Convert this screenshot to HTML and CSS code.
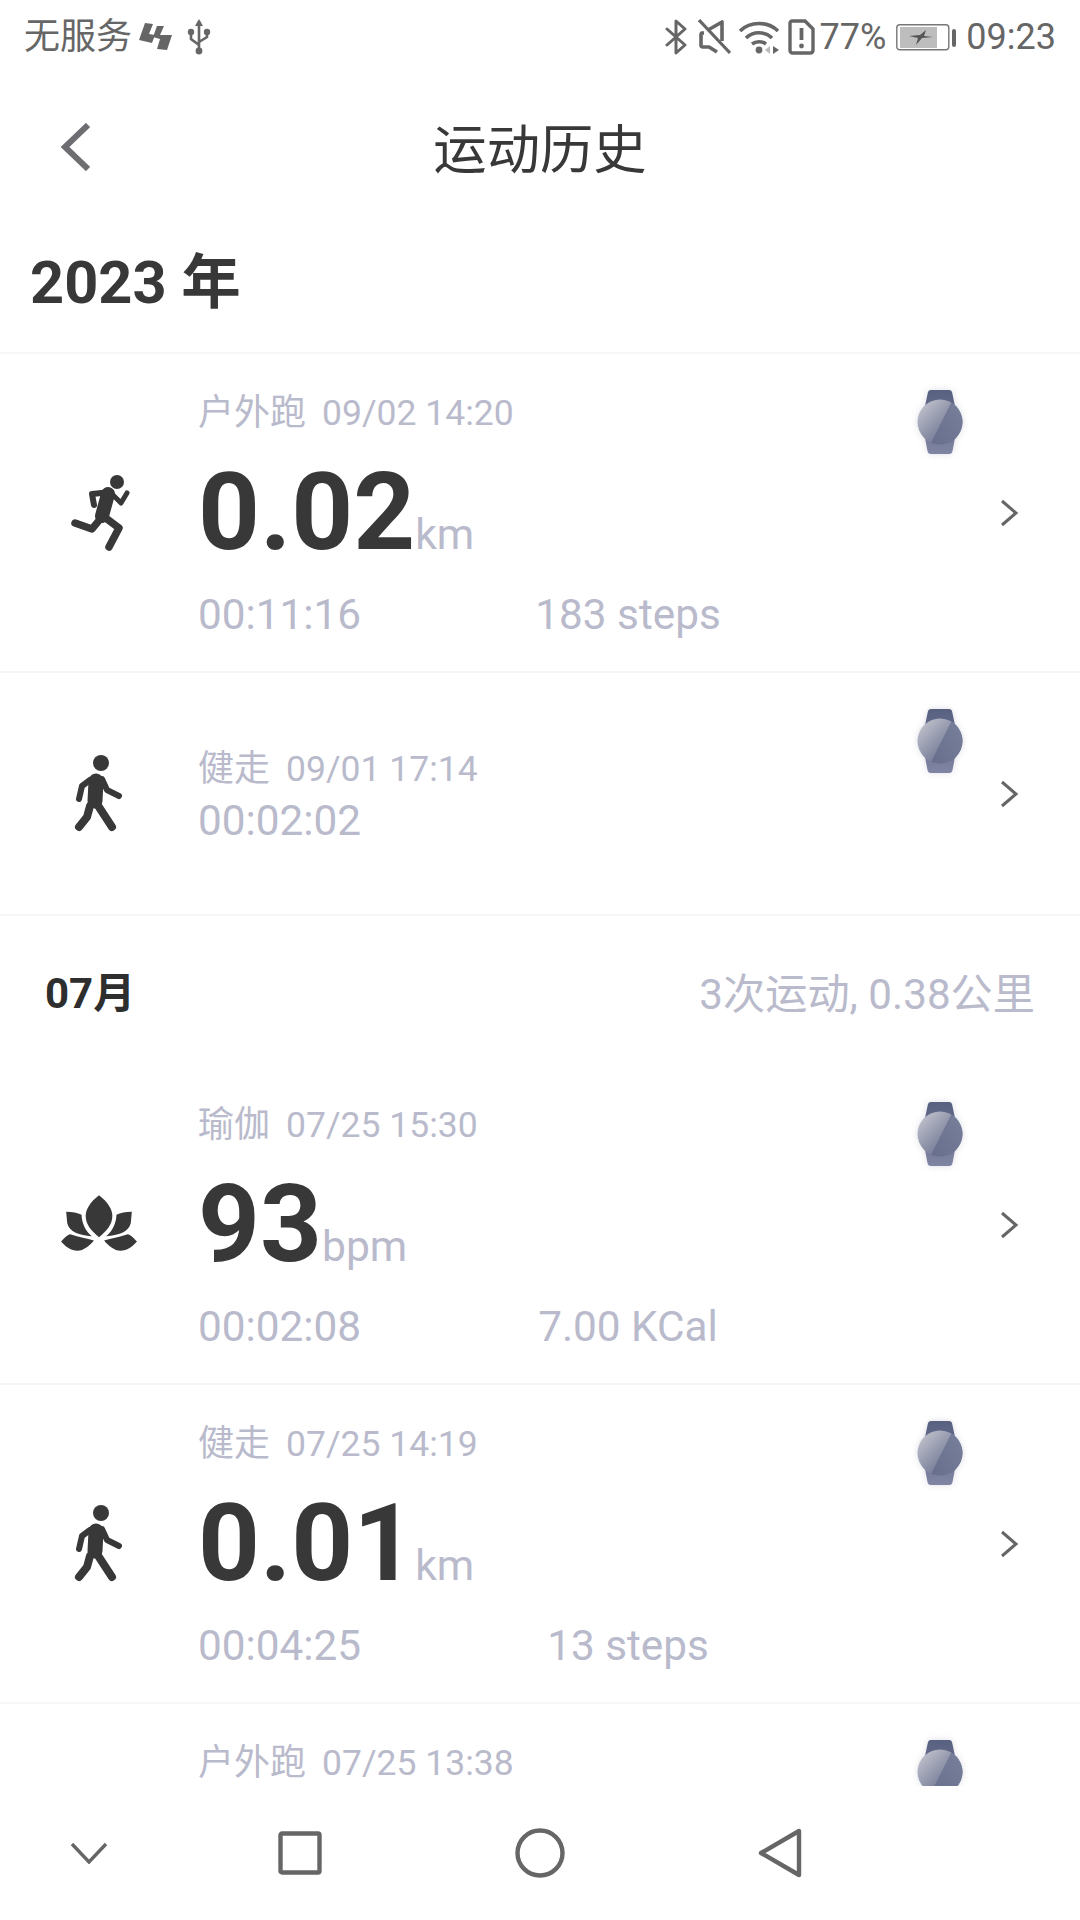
FILE: index.html
```html
<!DOCTYPE html>
<html lang="zh-CN">
<head>
<meta charset="utf-8">
<title>运动历史</title>
<link rel="stylesheet" href="styles.css">
</head>
<body>
<svg class="defs" width="0" height="0" aria-hidden="true">
  <defs>
    <linearGradient id="strap" x1="0" y1="0" x2="0" y2="1"><stop offset="0" stop-color="#596180"/><stop offset="0.5" stop-color="#6b7291"/><stop offset="1" stop-color="#7f85a2"/></linearGradient>
    <linearGradient id="face" x1="0.1" y1="0.1" x2="0.8" y2="0.8"><stop offset="0" stop-color="#bfc0cb"/><stop offset="0.7" stop-color="#80869f"/><stop offset="1" stop-color="#6f7693"/></linearGradient>
    <linearGradient id="band" x1="1" y1="0" x2="0" y2="1"><stop offset="0" stop-color="#7c839e"/><stop offset="1" stop-color="#646b89"/></linearGradient>
    <clipPath id="faceclip"><circle cx="30" cy="32" r="22.500"/></clipPath>
    <symbol id="watch" viewBox="0 0 60 64">
      <path d="M18 2 Q18.500 0 21 0 L39 0 Q41.500 0 42 2 L45 16 L45 48 L42.500 61 Q42 64 39 64 L21 64 Q18 64 17.500 61 L15 48 L15 16Z" fill="url(#strap)"/>
      <circle cx="30" cy="32" r="22.500" fill="url(#face)"/>
      <path d="M44.500 6 L15.500 64 L60 64 L60 6Z" fill="url(#band)" clip-path="url(#faceclip)"/>
    </symbol>
    <symbol id="chev" viewBox="0 0 20 28">
      <path d="M3 2 L17 14 L3 26" fill="none" stroke="#666" stroke-width="3"/>
    </symbol>
    <symbol id="run" viewBox="30 30 65 82">
      <circle cx="78" cy="42" r="7" fill="#383838"/>
      <g fill="none" stroke="#383838" stroke-linecap="round" stroke-linejoin="round">
        <path d="M72 52 L53 54 L55 65" stroke-width="6"/>
        <path d="M72 53 L82 63 L88 53" stroke-width="5"/>
        <path d="M69 54 L63 76" stroke-width="14"/>
        <path d="M62 78 L53 89 L36 83" stroke-width="7.500"/>
        <path d="M64 76 L80 88 L70 107" stroke-width="7.500"/>
      </g>
    </symbol>
    <symbol id="walk" viewBox="30 20 60 82">
      <circle cx="62" cy="32" r="8" fill="#383838"/>
      <g fill="none" stroke="#383838" stroke-linecap="round" stroke-linejoin="round">
        <path d="M57 50 L56 70" stroke-width="15"/>
        <path d="M51 49 L43 55 L40 68" stroke-width="6"/>
        <path d="M63 48 L68 59 L80 65" stroke-width="6"/>
        <path d="M51 75 L48 86 L40 96" stroke-width="8"/>
        <path d="M58 73 L73 96" stroke-width="8"/>
      </g>
    </symbol>
    <symbol id="lotus" viewBox="20 22 78 60">
      <g fill="#383838">
        <path d="M59 25 C50 32 46 39 46 45 C46 54 52 60 59 66 C66 60 72 54 72 45 C72 39 68 32 59 25Z"/>
        <g id="lotus-side">
          <path d="M27 41 C33 41 38 42 42 44 C42 52 46 60 52 65 C40 64 30 61 28 52 Z"/>
          <path d="M22 70 C26 66 29 63 31 63 C40 66 47 67 54 69 C50 74 44 79 38 79 C32 79 26 75 22 70Z"/>
        </g>
        <use href="#lotus-side" transform="translate(118 0) scale(-1 1)"/>
      </g>
    </symbol>
  </defs>
</svg>
<div class="screen">
  <header class="statusbar">
    <div class="status-group">
      <span class="status-text">无服务</span>
      <svg class="ic-hash" width="34" height="28" viewBox="0 0 34 28"><path d="M6 0 L14 1 L10 11 L16 12 L13 20 L0 17Z M18 3 L25 3 L21 12 L33 12 L28 27 L18 26 L21 16 L14 14Z" fill="#666"/></svg>
      <svg class="ic-usb" width="24" height="36" viewBox="0 0 24 36"><path d="M12 2 L12 33 M12 26 L4 20 L4 13 M12 23 L20 18 L20 13" fill="none" stroke="#666" stroke-width="2.600"/><path d="M12 0 L16 7 L8 7Z" fill="#666"/><circle cx="12" cy="32" r="3.400" fill="#666"/><circle cx="4" cy="13" r="3.200" fill="#666"/><circle cx="20" cy="13" r="3.200" fill="#666"/></svg>
    </div>
    <div class="status-group status-right">
      <svg width="24" height="36" viewBox="0 0 22 36"><path d="M2 10 L20 26 L11 34 L11 2 L20 10 L2 26" fill="none" stroke="#666" stroke-width="3" stroke-linejoin="round" stroke-linecap="round"/></svg>
      <svg class="ic-mute" width="33" height="36" viewBox="0 0 33 36"><path d="M6 14 L4 14 Q3 14 3 16 L3 26 Q3 28 5 28 L11 28 L19 33 M10 11 L24 3 L24 22" fill="none" stroke="#666" stroke-width="3.600" stroke-linejoin="round"/><path d="M1 1 L32 34" stroke="#666" stroke-width="3.200"/></svg>
      <svg class="ic-wifi" width="40" height="36" viewBox="0 0 40 36"><path d="M1 12 C11 2 29 2 39 12 M7 19 C14 12 26 12 33 19 M13 25 C17 22 23 22 27 25" fill="none" stroke="#666" stroke-width="3.600"/><circle cx="20" cy="31" r="3.400" fill="#666"/><path d="M34 27 L40 31 L34 35Z" fill="#666"/><path d="M31 27 L31 35 L26 31Z" fill="#bbb"/></svg>
      <svg class="ic-sim" width="27" height="36" viewBox="0 0 27 36"><path d="M4 2 L17 2 L25 10 L25 31 C25 33 24 34 22 34 L5 34 C3 34 2 33 2 31 L2 4 C2 3 3 2 4 2Z" fill="none" stroke="#666" stroke-width="3.400"/><path d="M13.500 9 L13.500 21" stroke="#666" stroke-width="3.800"/><circle cx="13.500" cy="27" r="2.400" fill="#666"/></svg>
      <span class="status-text status-pct">77%</span>
      <svg class="ic-batt" width="61" height="28" viewBox="0 0 61 28"><rect x="0.800" y="1.800" width="52" height="25" rx="3" fill="none" stroke="#777" stroke-width="1.400"/><rect x="4" y="4" width="37" height="21" fill="#bdbdbd"/><path d="M13 13 L24 12 L30 7 L28 13 L37 14 L26 15 L20 22 L22 15Z" fill="#555"/><rect x="56" y="6" width="4" height="18" rx="2" fill="#666"/></svg>
      <span class="status-text status-time">09:23</span>
    </div>
  </header>

  <nav class="appbar">
    <svg class="back" width="30" height="48" viewBox="0 0 30 48"><path d="M28 2 L5 24 L28 46" fill="none" stroke="#6e6e72" stroke-width="6"/></svg>
    <h1 class="title">运动历史</h1>
  </nav>

  <main class="list">
    <h2 class="year">2023 年</h2>

    <article class="row">
      <svg class="act act-run"><use href="#run"/></svg>
      <div class="body">
        <div class="meta">户外跑<span class="date">09/02 14:20</span></div>
        <div class="value"><b>0.02</b><span class="unit">km</span></div>
        <div class="stats"><span>00:11:16</span><span class="stat-c">183 steps</span></div>
      </div>
      <svg class="watch"><use href="#watch"/></svg>
      <svg class="chev"><use href="#chev"/></svg>
    </article>

    <article class="row row-short">
      <svg class="act act-walk"><use href="#walk"/></svg>
      <div class="body">
        <div class="meta">健走<span class="date">09/01 17:14</span></div>
        <div class="stats stats-short"><span>00:02:02</span></div>
      </div>
      <svg class="watch"><use href="#watch"/></svg>
      <svg class="chev"><use href="#chev"/></svg>
    </article>

    <section class="month">
      <span class="month-name">07月</span>
      <span class="month-sum">3次运动, 0.38公里</span>
    </section>

    <article class="row">
      <svg class="act act-lotus"><use href="#lotus"/></svg>
      <div class="body">
        <div class="meta">瑜伽<span class="date">07/25 15:30</span></div>
        <div class="value"><b>93</b><span class="unit">bpm</span></div>
        <div class="stats"><span>00:02:08</span><span class="stat-c">7.00 KCal</span></div>
      </div>
      <svg class="watch"><use href="#watch"/></svg>
      <svg class="chev"><use href="#chev"/></svg>
    </article>

    <article class="row">
      <svg class="act act-walk"><use href="#walk"/></svg>
      <div class="body">
        <div class="meta">健走<span class="date">07/25 14:19</span></div>
        <div class="value"><b>0.01</b><span class="unit">km</span></div>
        <div class="stats"><span>00:04:25</span><span class="stat-c">13 steps</span></div>
      </div>
      <svg class="watch"><use href="#watch"/></svg>
      <svg class="chev"><use href="#chev"/></svg>
    </article>

    <article class="row">
      <svg class="act act-run"><use href="#run"/></svg>
      <div class="body">
        <div class="meta">户外跑<span class="date">07/25 13:38</span></div>
      </div>
      <svg class="watch"><use href="#watch"/></svg>
      <svg class="chev"><use href="#chev"/></svg>
    </article>
  </main>

  <footer class="navbar">
    <svg width="38" height="22" viewBox="0 0 38 22"><path d="M2 2 L19 20 L36 2" fill="none" stroke="#666" stroke-width="3.400"/></svg>
    <svg width="44" height="44" viewBox="0 0 44 44"><rect x="2.500" y="2.500" width="39" height="39" rx="1.500" fill="none" stroke="#666" stroke-width="4.400"/></svg>
    <svg width="50" height="50" viewBox="0 0 50 50"><circle cx="25" cy="25" r="22.500" fill="none" stroke="#666" stroke-width="4.400"/></svg>
    <svg width="44" height="50" viewBox="0 0 44 50"><path d="M41 3 L41 47 L3 25Z" fill="none" stroke="#666" stroke-width="4.400" stroke-linejoin="round"/></svg>
  </footer>
</div>
</body>
</html>
```
FILE: styles.css
```css
* { box-sizing: border-box; }
html, body { margin: 0; padding: 0; background: #fff; }
body { font-family: Roboto, "Noto Sans CJK SC", sans-serif; color: #383838; }
.defs { position: absolute; }
.screen { width: 1080px; height: 1920px; display: flex; flex-direction: column; overflow: hidden; }

.statusbar { height: 72px; flex: none; display: flex; justify-content: space-between; align-items: center; padding: 2px 24px 0 24px; }
.status-group { display: flex; align-items: center; }
.status-text { font-size: 36px; line-height: 40px; color: #666; }
.ic-hash { margin-left: 7px; }
.ic-usb { margin-left: 14px; }
.ic-mute { margin-left: 10px; }
.ic-wifi { margin-left: 8px; }
.ic-sim { margin-left: 9px; }
.status-pct { margin-left: 5px; }
.ic-batt { margin-left: 10px; }
.status-time { margin-left: 9px; }

.appbar { height: 156px; flex: none; position: relative; display: flex; align-items: center; justify-content: center; padding-top: 2px; }
.back { position: absolute; left: 60px; top: 51px; }
.title { margin: 0; font-size: 53.330px; font-weight: 400; line-height: 154px; color: #383838; }

.list { flex: 1; min-height: 0; overflow: hidden; }
.year { margin: 0; height: 126px; padding-left: 30px; font-size: 59.500px; line-height: 110px; font-weight: 700; border-bottom: 2px solid #f6f6f6; }

.row { height: 319px; display: grid; grid-template-columns: 198px 1fr 93px 46px; padding-right: 48px; border-bottom: 2px solid #f6f6f6; }
.row-short { height: 243px; }
.act { align-self: center; justify-self: center; }
.act-run { width: 65px; height: 82px; margin: -3px 0 0 4px; }
.act-walk { width: 60px; height: 82px; margin-top: -4px; }
.act-lotus { width: 80px; height: 62px; margin: -3px 0 0 -1px; }

.body { padding-top: 30px; min-width: 0; }
.row-short .body { padding-top: 67px; }
.meta { font-size: 36px; line-height: 58px; color: #b9bacb; white-space: nowrap; }
.date { font-size: 35.500px; margin-left: 16px; }
.value { height: 140px; line-height: 140px; white-space: nowrap; }
.value b { font-size: 108px; font-weight: 700; color: #383838; }
.unit { font-size: 42.670px; color: #b9bacb; }
.stats { display: grid; grid-template-columns: 246px 368px; font-size: 42.300px; line-height: 66px; color: #b9bacb; white-space: nowrap; }
.stats-short { line-height: 46px; }
.stat-c { text-align: center; }

.watch { width: 60px; height: 64px; justify-self: center; margin-top: 36px; filter: drop-shadow(0 0 3px rgba(120,125,160,.25)); }
.chev { width: 20px; height: 28px; align-self: center; justify-self: center; }

.month { height: 150px; display: flex; justify-content: space-between; align-items: center; padding: 0 45px 0 45px; }
.month-name { font-size: 42px; font-weight: 700; color: #2e2e2e; margin-bottom: 4px; }
.month-sum { font-size: 42.200px; color: #b9bacb; margin-bottom: 2px; }

.navbar { height: 134px; flex: none; background: #fff; display: grid; grid-template-columns: 178px 244px 236px 244px 178px; justify-items: center; align-items: center; }
```
